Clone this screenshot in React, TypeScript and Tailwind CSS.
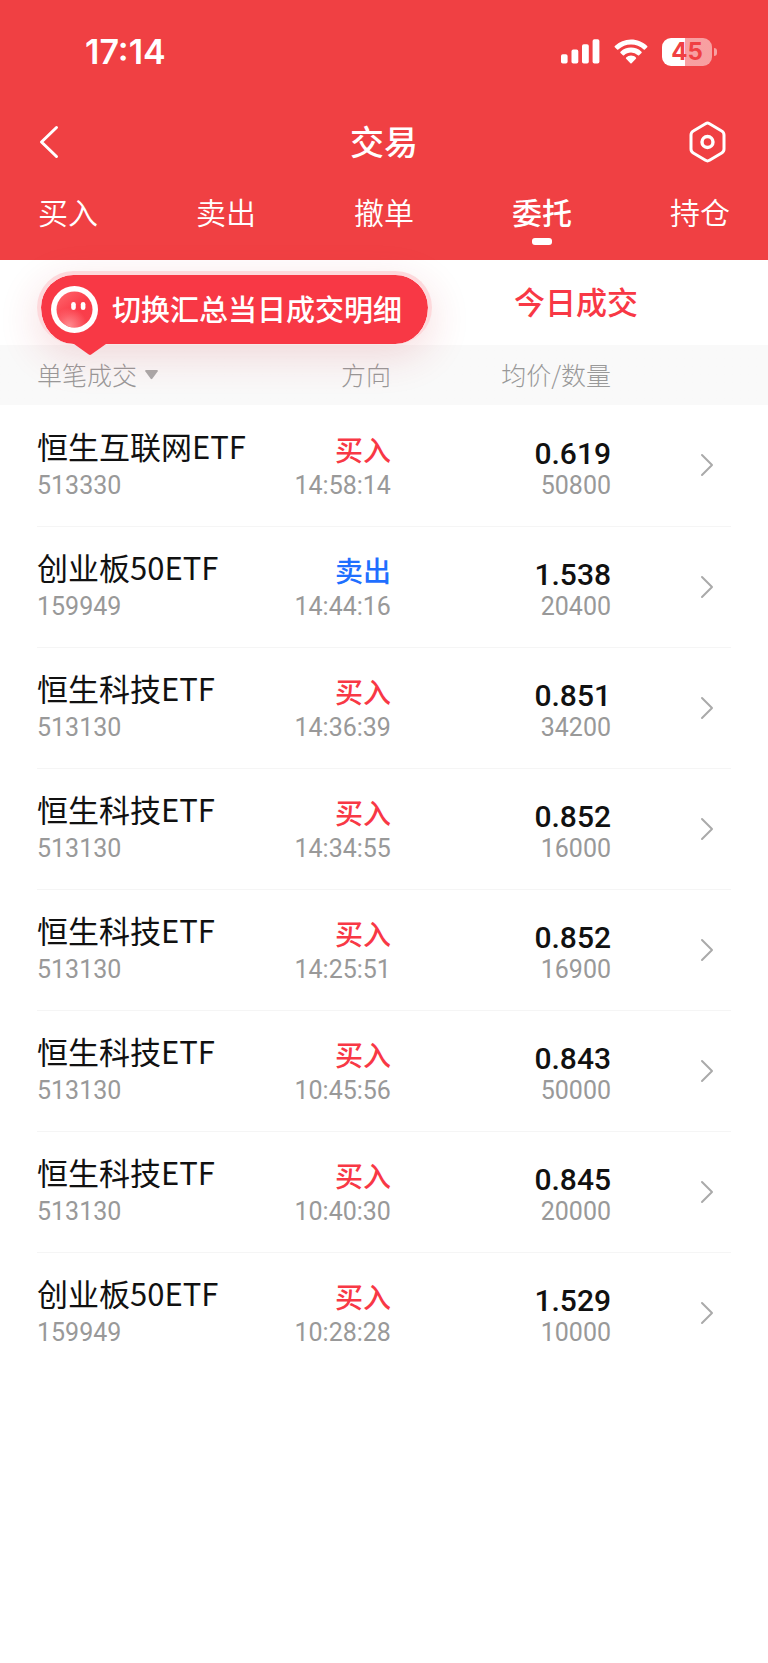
import { useState } from "react"

const tabs = ["买入", "卖出", "撤单", "委托", "持仓"]

interface Trade {
  name: string
  code: string
  side: "买入" | "卖出"
  time: string
  price: string
  amount: string
}

const trades: Trade[] = [
  { name: "恒生互联网ETF", code: "513330", side: "买入", time: "14:58:14", price: "0.619", amount: "50800" },
  { name: "创业板50ETF", code: "159949", side: "卖出", time: "14:44:16", price: "1.538", amount: "20400" },
  { name: "恒生科技ETF", code: "513130", side: "买入", time: "14:36:39", price: "0.851", amount: "34200" },
  { name: "恒生科技ETF", code: "513130", side: "买入", time: "14:34:55", price: "0.852", amount: "16000" },
  { name: "恒生科技ETF", code: "513130", side: "买入", time: "14:25:51", price: "0.852", amount: "16900" },
  { name: "恒生科技ETF", code: "513130", side: "买入", time: "10:45:56", price: "0.843", amount: "50000" },
  { name: "恒生科技ETF", code: "513130", side: "买入", time: "10:40:30", price: "0.845", amount: "20000" },
  { name: "创业板50ETF", code: "159949", side: "买入", time: "10:28:28", price: "1.529", amount: "10000" },
]

function StatusBar() {
  return (
    <div className="flex h-[103px] items-center justify-between pl-[85px] pr-[51px]">
      <span className="font-['Inter',sans-serif] text-[34px] font-semibold leading-10">17:14</span>
      <div className="flex items-center gap-[14px]">
        <svg width="39" height="25" viewBox="0 0 39 25" fill="currentColor" aria-hidden="true">
          <rect x="0" y="15.3" width="6.6" height="9.2" rx="1.8" />
          <rect x="10.5" y="10.6" width="6.8" height="13.9" rx="1.8" />
          <rect x="21" y="5.3" width="6.8" height="19.2" rx="1.8" />
          <rect x="31.6" y="0.3" width="6.8" height="24.2" rx="1.8" />
        </svg>
        <svg width="34" height="25" viewBox="0 0 34 25" fill="currentColor" aria-hidden="true">
          <path d="M17 .5c6.2 0 11.9 2.4 16.2 6.5.4.4.4.9 0 1.3l-2.3 2.3c-.3.3-.8.3-1.2 0A18.3 18.3 0 0 0 17 5.5c-4.9 0-9.3 1.9-12.7 5.1-.4.3-.9.3-1.2 0L.8 8.3c-.4-.4-.4-.9 0-1.3A23.4 23.4 0 0 1 17 .5z" />
          <path d="M17 8.6c4 0 7.7 1.5 10.5 4.1.4.4.4.9 0 1.3l-2.4 2.3c-.3.3-.8.3-1.2 0A10.3 10.3 0 0 0 17 13.6c-2.6 0-5.1 1-6.9 2.7-.4.3-.9.3-1.2 0L6.5 14c-.4-.4-.4-.9 0-1.3A15.4 15.4 0 0 1 17 8.6z" />
          <path d="M17 16.6c1.9 0 3.6.7 4.9 1.8.4.4.4.9 0 1.3l-4.3 4.5c-.3.4-.8.4-1.2 0l-4.3-4.5c-.4-.4-.4-.9 0-1.3a7.5 7.5 0 0 1 4.9-1.8z" />
        </svg>
        <div className="flex items-center gap-[2px]">
          <div className="flex h-7 w-[50px] items-center justify-center rounded-[9px] bg-linear-to-r from-white from-46% to-white/50 to-46% font-['Inter',sans-serif] text-[24px] font-bold leading-7 text-[#f04043]">
            45
          </div>
          <div className="h-2 w-[3px] rounded-r-full bg-white/50"></div>
        </div>
      </div>
    </div>
  )
}

function Tip() {
  return (
    <div className="absolute left-[37px] top-[11px] z-10">
      <div className="flex items-center gap-[14px] rounded-full border-4 border-b-0 border-[#fdd9dc] bg-[#f83845] bg-clip-padding py-[11px] pl-[10px] pr-[26px] shadow-[0_12px_40px_rgba(200,40,50,0.16)]">
        <svg width="47" height="47" viewBox="0 0 47 47" aria-hidden="true">
          <defs>
            <linearGradient id="face" x1="0" y1="0" x2="0.8" y2="1">
              <stop offset="0" stopColor="#ff6a70" />
              <stop offset="0.55" stopColor="#fb3c49" />
              <stop offset="1" stopColor="#f8404c" />
            </linearGradient>
            <radialGradient id="chin" cx="0.35" cy="0.95" r="0.5">
              <stop offset="0" stopColor="#ff8a90" />
              <stop offset="1" stopColor="#ff8a90" stopOpacity="0" />
            </radialGradient>
          </defs>
          <circle cx="23.5" cy="23.5" r="23.5" fill="#fff" />
          <circle cx="23.5" cy="23.5" r="18" fill="url(#face)" />
          <circle cx="23.5" cy="23.5" r="18" fill="url(#chin)" />
          <rect x="20.2" y="16" width="4.6" height="8" rx="2.3" fill="#fff" />
          <rect x="29.8" y="16" width="4.6" height="8" rx="2.3" fill="#fff" />
        </svg>
        <span className="pb-1 text-[29px] font-medium leading-10 text-white">切换汇总当日成交明细</span>
      </div>
      <svg className="absolute left-[37px] top-[72px]" width="32" height="14" viewBox="0 0 32 14" aria-hidden="true">
        <path d="M0 0h32v1L17.2 11.5q-1.2.8-2.4 0L0 1z" fill="#f83845" />
      </svg>
    </div>
  )
}

export default function App() {
  const [activeTab, setActiveTab] = useState("委托")

  return (
    <div className="min-h-screen bg-white font-['Noto_Sans_CJK_SC',sans-serif]">
      <header className="bg-[#f04043] text-white">
        <StatusBar />
        <div className="flex h-[78px] items-center justify-between px-[38px]">
          <button aria-label="返回" className="flex w-10">
            <svg width="22" height="34" viewBox="0 0 22 34" fill="none" stroke="currentColor" strokeWidth="3" strokeLinecap="round" strokeLinejoin="round" aria-hidden="true">
              <path d="M18.5 2.5L3.5 17l15 14.5" />
            </svg>
          </button>
          <h1 className="pb-[2px] text-[34px] font-medium leading-[48px]">交易</h1>
          <button aria-label="设置" className="flex w-10">
            <svg width="40" height="42" viewBox="0 0 40 42" fill="none" stroke="currentColor" strokeWidth="3" overflow="visible" aria-hidden="true">
              <path d="M15.5 2.7q2-1.2 4 0l12.2 7.3q2.3 1.3 2.3 4v14q0 2.7-2.3 4l-12.2 7.3q-2 1.2-4 0L3.3 32q-2.3-1.3-2.3-4V14q0-2.7 2.3-4z" />
              <circle cx="17.5" cy="21" r="5.5" strokeWidth="3.4" />
            </svg>
          </button>
        </div>
        <nav className="flex justify-between px-[38px] pb-[15px] pt-2">
          {tabs.map((tab) => (
            <button key={tab} className="flex flex-col items-center gap-[5px]" onClick={() => setActiveTab(tab)}>
              <span className={`text-[30px] leading-[44px] ${activeTab === tab ? "font-medium" : "font-[350]"}`}>{tab}</span>
              <span className={`h-[7px] w-5 rounded-[3px] ${activeTab === tab ? "bg-white" : ""}`}></span>
            </button>
          ))}
        </nav>
      </header>

      <main className="relative">
        <Tip />
        <div className="flex h-[85px] justify-end">
          <button className="w-1/2 pb-[2px] text-[31px] font-medium text-[#f83845]">今日成交</button>
        </div>

        <div className="bg-linear-to-b from-[#f9f9f9] from-[60px] to-white to-[60px] px-[37px]">
          <table className="w-full table-fixed border-collapse">
            <thead>
              <tr className="h-[60px] text-[25px] text-[#999]">
                <th className="w-[33%] p-0 text-left font-light">
                  <button className="flex items-center gap-2">
                    单笔成交
                    <svg width="13" height="10" viewBox="0 0 13 10" fill="#aaa" aria-hidden="true">
                      <path d="M1 0h11q1.3.3.6 1.5L7.3 8.8q-.8.8-1.6 0L.4 1.5Q-.3.3 1 0z" />
                    </svg>
                  </button>
                </th>
                <th className="w-[18%] p-0 text-right font-light">方向</th>
                <th className="w-[32%] p-0 pr-[2px] text-right font-light">均价/数量</th>
                <th className="p-0"></th>
              </tr>
            </thead>
            <tbody>
              {trades.map((trade) => (
                <tr key={trade.time} className="h-[121px] border-b border-[#f5f5f5] last:border-0">
                  <td className="p-0 pb-6 align-bottom">
                    <div className="whitespace-nowrap text-[31px] leading-[48px] text-[#111]">{trade.name}</div>
                    <div className="font-['Roboto',sans-serif] text-[25px] leading-8 text-[#999]">{trade.code}</div>
                  </td>
                  <td className="p-0 pb-6 text-right align-bottom">
                    <div className={`text-[28px] font-medium leading-[42px] ${trade.side === "买入" ? "text-[#f83845]" : "text-[#1f6fff]"}`}>
                      {trade.side}
                    </div>
                    <div className="font-['Roboto',sans-serif] text-[25px] leading-8 text-[#999]">{trade.time}</div>
                  </td>
                  <td className="p-0 pb-6 pr-[2px] text-right align-bottom font-['Roboto',sans-serif]">
                    <div className="text-[30px] font-medium leading-8 text-[#111]">{trade.price}</div>
                    <div className="text-[25px] leading-8 text-[#999]">{trade.amount}</div>
                  </td>
                  <td className="p-0 pr-[17px] align-middle">
                    <button aria-label="查看明细" className="ml-auto flex">
                      <svg width="14" height="24" viewBox="0 0 14 24" fill="none" stroke="#aaa" strokeWidth="2" strokeLinecap="round" strokeLinejoin="round" aria-hidden="true">
                        <path d="M2 2l10 10L2 22" />
                      </svg>
                    </button>
                  </td>
                </tr>
              ))}
            </tbody>
          </table>
        </div>
      </main>
    </div>
  )
}
